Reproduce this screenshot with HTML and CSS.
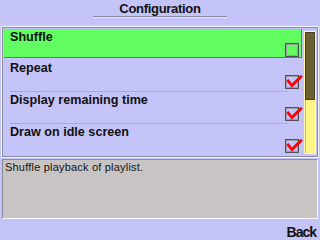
FILE: index.html
```html
<!DOCTYPE html>
<html>
<head>
<meta charset="utf-8">
<link rel="stylesheet" href="styles.css">
</head>
<body>
<div class="screen">
  <header class="header"><h1 class="title">Configuration</h1></header>
  <div class="frame">
    <div class="frame-inner">
      <div class="list">
        <div class="row sel">
          <span class="label">Shuffle</span>
          <span class="check"></span>
        </div>
        <div class="row sep">
          <span class="label">Repeat</span>
          <span class="check"><svg class="tick" viewBox="0 0 18 14" width="18" height="14"><path d="M2.4 4.8 L6.9 10.6 L16.8 0.8"/></svg></span>
        </div>
        <div class="row sep">
          <span class="label">Display remaining time</span>
          <span class="check"><svg class="tick" viewBox="0 0 18 14" width="18" height="14"><path d="M2.4 4.8 L6.9 10.6 L16.8 0.8"/></svg></span>
        </div>
        <div class="row">
          <span class="label">Draw on idle screen</span>
          <span class="check"><svg class="tick" viewBox="0 0 18 14" width="18" height="14"><path d="M2.4 4.8 L6.9 10.6 L16.8 0.8"/></svg></span>
        </div>
      </div>
      <div class="scroll"><div class="thumb"></div></div>
    </div>
  </div>
  <div class="desc">Shuffle playback of playlist.</div>
  <div class="softkeys"><span class="softkey">Back</span></div>
</div>
</body>
</html>
```
FILE: styles.css
```css
html, body {
  margin: 0;
  padding: 0;
}
body {
  background: #c4c4f8;
  font-family: "Liberation Sans", Arial, sans-serif;
  color: #101010;
}
.screen {
  width: 320px;
  height: 240px;
  overflow: hidden;
  display: flex;
  flex-direction: column;
}
.header {
  height: 26px;
  display: flex;
  justify-content: center;
}
.title {
  margin: 0;
  width: 134px;
  padding-top: 2px;
  height: 14px;
  line-height: 14px;
  font-size: 13px;
  font-weight: bold;
  letter-spacing: -0.3px;
  text-align: center;
  border-bottom: 1px solid #8c8ca0;
  box-shadow: 0 1px 0 #e4e4ff;
}
.frame {
  margin: 0 1px;
  border: 1px solid #f4f4ff;
}
.frame-inner {
  border: 1px solid #8a8aa0;
  height: 128px;
  display: flex;
}
.list {
  width: 301px;
  display: flex;
  flex-direction: column;
}
.row {
  position: relative;
  height: 32px;
  box-sizing: border-box;
  padding: 1px 4px 0 7px;
  display: flex;
  justify-content: space-between;
  z-index: 0;
}
.row.sel {
  padding-top: 2px;
}
.row.sel::before {
  content: "";
  position: absolute;
  left: 1px;
  right: 1px;
  top: 1px;
  bottom: 2px;
  background: #60fc60;
  border-bottom: 1px solid #30a030;
  border-right: 1px solid #30a030;
  z-index: -1;
}
.row.sep::after {
  content: "";
  position: absolute;
  left: 7px;
  right: 15px;
  bottom: 0;
  height: 1px;
  background: #a8a8dc;
}
.label {
  font-size: 12.6px;
  font-weight: bold;
  line-height: 14px;
  height: 14px;
  white-space: nowrap;
}
.check {
  position: relative;
  align-self: flex-end;
  margin-bottom: 3px;
  width: 14px;
  height: 14px;
  box-sizing: border-box;
  border: 1px solid #505058;
  box-shadow: inset 0 0 0 1px #9c9cac;
}
.row.sel .check {
  margin-bottom: 3px;
}
.tick {
  position: absolute;
  left: -1px;
  top: -1px;
  overflow: visible;
}
.tick path {
  fill: none;
  stroke: #ff0000;
  stroke-width: 2.8;
  stroke-linejoin: miter;
}
.scroll {
  margin: 3px 1px 2px 1px;
  width: 12px;
  box-sizing: border-box;
  border: 1px solid #fff8b0;
  background: #fff484;
  box-shadow: inset 1px 0 0 #c8b860;
}
.thumb {
  height: 68px;
  box-sizing: border-box;
  background: #6c6032;
  border: 1px solid #4a4020;
}
.desc {
  margin: 1px 2px 0 2px;
  height: 60px;
  box-sizing: border-box;
  background: #c8c4c4;
  border-top: 1px solid #8c8c94;
  border-left: 1px solid #8c8c94;
  border-bottom: 1px solid #f8f8f8;
  border-right: 1px solid #f8f8f8;
  padding: 1px 2px;
  font-size: 11px;
  line-height: 13px;
  letter-spacing: 0.2px;
  color: #141414;
}
.softkeys {
  margin-top: 5px;
  display: flex;
  justify-content: flex-end;
  padding-right: 4px;
}
.softkey {
  font-size: 14px;
  line-height: 16px;
  font-weight: bold;
  letter-spacing: -1px;
}
```
